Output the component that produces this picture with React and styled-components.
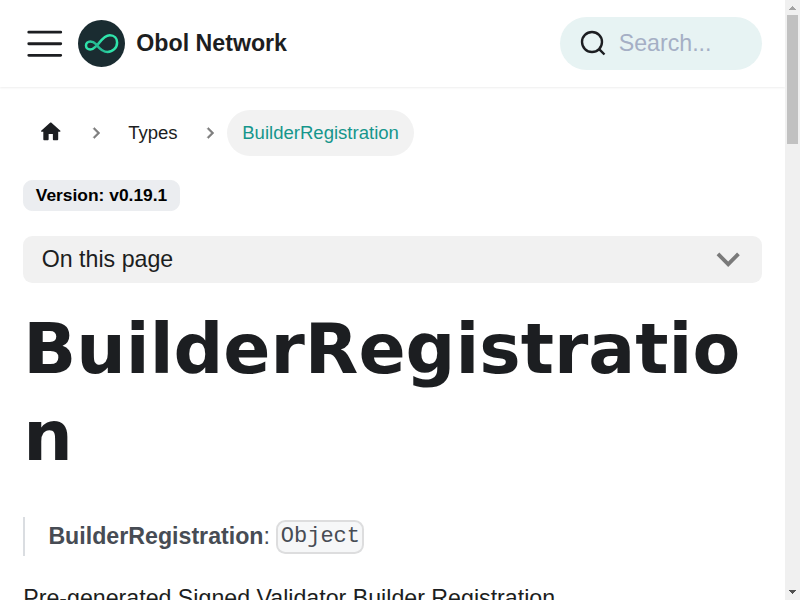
import React from "react";
import styled, { createGlobalStyle } from "styled-components";

const GlobalStyle = createGlobalStyle`
  html { font-size: 23.2px; }
  *, *::before, *::after { box-sizing: border-box; }
  body {
    margin: 0;
    overflow: hidden;
    background: #fff;
    color: #1c1e21;
    font-family: "Liberation Sans", Arial, sans-serif;
    line-height: 1.65;
  }
`;

const Window = styled.div`
  display: flex;
  width: 800px;
  height: 600px;
  overflow: hidden;
`;

const Page = styled.div`
  flex: 1;
  min-width: 0;
`;

const Navbar = styled.nav`
  display: flex;
  align-items: center;
  justify-content: space-between;
  height: 3.75rem;
  padding: 0 1rem;
  background: #fff;
  box-shadow: 0 1px 2px rgba(0, 0, 0, 0.07);
`;

const NavGroup = styled.div`
  display: flex;
  align-items: center;
`;

const MenuButton = styled.button`
  display: flex;
  margin: 0 0.5rem 0 0;
  padding: 0;
  border: 0;
  background: none;
  color: inherit;

  svg {
    width: 1.875rem;
    height: 1.875rem;
  }
`;

const Logo = styled.svg`
  width: 47px;
  height: 47px;
  margin-right: 11px;
`;

const Brand = styled.b`
  font-size: 1rem;
`;

const SearchButton = styled.button`
  display: flex;
  align-items: center;
  width: 8.69rem;
  height: 53px;
  padding: 0 0 0 19.7px;
  border: 0;
  border-radius: 40px;
  background: #e7f3f3;
  color: #a5afc5;
  font: 1rem "Liberation Sans", Arial, sans-serif;
  gap: 12.3px;

  svg {
    width: 26.5px;
    height: 26.5px;
    color: #1c1e21;
  }
`;

const Main = styled.main`
  padding: 1rem 1rem 0;
`;

const Breadcrumbs = styled.ul`
  display: flex;
  align-items: center;
  margin: 0;
  padding: 0;
  list-style: none;
  font-size: 0.8rem;
`;

const Crumb = styled.li`
  display: flex;
  align-items: center;
`;

const CrumbLink = styled.a`
  display: block;
  height: 45.6px;
  padding: 0.4em 0.8em;
  border-radius: 50px;
  background: ${(p) => (p.$active ? "#f2f2f2" : "transparent")};
  color: ${(p) => (p.$active ? "#16968c" : "inherit")};
`;

const HomeIcon = styled.svg`
  display: block;
  width: 1.1rem;
  height: 1.1rem;
  margin-top: 1px;
`;

const Separator = styled.svg`
  width: 0.6em;
  height: 12px;
  margin: 0 0.5rem 0 12.2px;
  opacity: 0.5;
`;

const VersionBadge = styled.span`
  display: block;
  width: fit-content;
  margin: 24.2px 0 25.2px;
  padding: 5.3px 11.6px;
  border: 1px solid #ebedf0;
  border-radius: 0.4rem;
  background: #ebedf0;
  color: #000;
  font-size: 0.75rem;
  font-weight: 700;
  line-height: 18.4px;
`;

const Toc = styled.button`
  display: flex;
  align-items: center;
  justify-content: space-between;
  width: 100%;
  height: 46.6px;
  margin: 0 0 1rem;
  padding: 0 0.8rem;
  border: 0;
  border-radius: 0.4rem;
  background: #f1f1f1;
  color: inherit;
  font: 1rem "Liberation Sans", Arial, sans-serif;

  svg {
    width: 2rem;
    height: 2rem;
    margin-right: -0.34rem;
  }
`;

const Title = styled.h1`
  margin: 0 0 37px;
  font: bold 3rem/1.25 "DejaVu Sans", sans-serif;
  overflow-wrap: break-word;
`;

const Quote = styled.blockquote`
  margin: 0 0 1rem;
  padding: 0 1rem;
  border-left: 2px solid #dadde1;
  color: #474c54;
`;

const Code = styled.code`
  padding: 0.1rem;
  border: 2px solid rgba(0, 0, 0, 0.1);
  border-radius: 0.4rem;
  background: #f6f7f8;
  font-family: "Liberation Mono", monospace;
  font-size: 95%;
  vertical-align: middle;
`;

const Paragraph = styled.p`
  margin: 0;
`;

const Scrollbar = styled.div`
  display: flex;
  flex-direction: column;
  align-items: center;
  justify-content: space-between;
  width: 15px;
  background: #f0f0f0;
`;

const ScrollTop = styled.div`
  display: flex;
  flex-direction: column;
  align-items: center;
`;

const ArrowIcon = styled.svg`
  display: block;
  width: 15px;
  height: 15px;
`;

const Thumb = styled.div`
  width: 11px;
  height: 129px;
  background: #c1c1c1;
`;

function CrumbSeparator() {
  return (
    <Separator viewBox="0 0 256 256">
      <path d="M79.093 0 48.907 30.187 146.72 128 48.907 225.813 79.093 256l128-128z" stroke="#000" strokeWidth="10" />
    </Separator>
  );
}

export default function App() {
  return (
    <>
      <GlobalStyle />
      <Window>
        <Page>
          <Navbar>
            <NavGroup>
              <MenuButton aria-label="Toggle navigation bar">
                <svg viewBox="0 0 30 30" stroke="currentColor" strokeWidth="2" strokeLinecap="round">
                  <path d="M4 7h22M4 15h22M4 23h22" />
                </svg>
              </MenuButton>
              <Logo viewBox="0 0 47 47" fill="none">
                <defs>
                  <linearGradient id="loop" gradientUnits="userSpaceOnUse" x1="14" y1="29" x2="27" y2="17">
                    <stop offset="0" stopColor="#2fe4ab" />
                    <stop offset="0.35" stopColor="#25b992" />
                    <stop offset="0.7" stopColor="#2fe4ab" />
                  </linearGradient>
                </defs>
                <circle cx="23.5" cy="23.5" r="23.5" fill="#1a2c31" />
                <path
                  d="M19.3 25C21 23.5 25.8 15.2 31.8 15.2C36.4 15.2 39.1 18.5 39.1 22.4C39.1 27.8 34.8 32 29.5 32C23.5 32 20.2 26.8 17.8 24C16.2 22.2 14.5 21.4 12.3 21.4C9.8 21.4 8 23.3 8 25.5C8 27.7 9.8 29.4 12.1 29.4C15.6 29.4 16.9 27.2 19.3 25Z"
                  stroke="url(#loop)"
                  strokeWidth="2.5"
                />
              </Logo>
              <Brand>Obol Network</Brand>
            </NavGroup>
            <SearchButton>
              <svg viewBox="0 0 20 20" fill="none" stroke="currentColor" strokeWidth="1.8" strokeLinecap="round">
                <path d="M14.386 14.386l4.0877 4.0877-4.0877-4.0877c-2.9418 2.9419-7.7115 2.9419-10.6533 0-2.9419-2.9418-2.9419-7.7115 0-10.6533 2.9418-2.9419 7.7115-2.9419 10.6533 0 2.9419 2.9418 2.9419 7.7115 0 10.6533z" />
              </svg>
              <span>Search...</span>
            </SearchButton>
          </Navbar>
          <Main>
            <Breadcrumbs>
              <Crumb>
                <CrumbLink aria-label="Home page">
                  <HomeIcon viewBox="0 0 24 24" fill="currentColor">
                    <path d="M10 19v-5h4v5c0 .55.45 1 1 1h3c.55 0 1-.45 1-1v-7h1.7c.46 0 .68-.57.33-.87L12.67 3.6c-.38-.34-.96-.34-1.34 0l-8.36 7.53c-.34.3-.13.87.33.87H5v7c0 .55.45 1 1 1h3c.55 0 1-.45 1-1z" />
                  </HomeIcon>
                </CrumbLink>
                <CrumbSeparator />
              </Crumb>
              <Crumb>
                <CrumbLink>Types</CrumbLink>
                <CrumbSeparator />
              </Crumb>
              <Crumb>
                <CrumbLink $active>BuilderRegistration</CrumbLink>
              </Crumb>
            </Breadcrumbs>
            <VersionBadge>Version: v0.19.1</VersionBadge>
            <Toc>
              <span>On this page</span>
              <svg viewBox="0 0 24 24" fill="#7a7a7a">
                <path d="M16.59 8.59 12 13.17 7.41 8.59 6 10l6 6 6-6z" />
              </svg>
            </Toc>
            <Title>BuilderRegistration</Title>
            <Quote>
              <strong>BuilderRegistration</strong>: <Code>Object</Code>
            </Quote>
            <Paragraph>Pre-generated Signed Validator Builder Registration</Paragraph>
          </Main>
        </Page>
        <Scrollbar>
          <ScrollTop>
            <ArrowIcon viewBox="0 0 15 15" fill="#a3a3a3" shapeRendering="crispEdges">
              <path d="M4 10 7.5 6 11 10z" />
            </ArrowIcon>
            <Thumb />
          </ScrollTop>
          <ArrowIcon viewBox="0 0 15 15" fill="#505050" shapeRendering="crispEdges">
            <path d="M4 5h7L7.5 9z" />
          </ArrowIcon>
        </Scrollbar>
      </Window>
    </>
  );
}
